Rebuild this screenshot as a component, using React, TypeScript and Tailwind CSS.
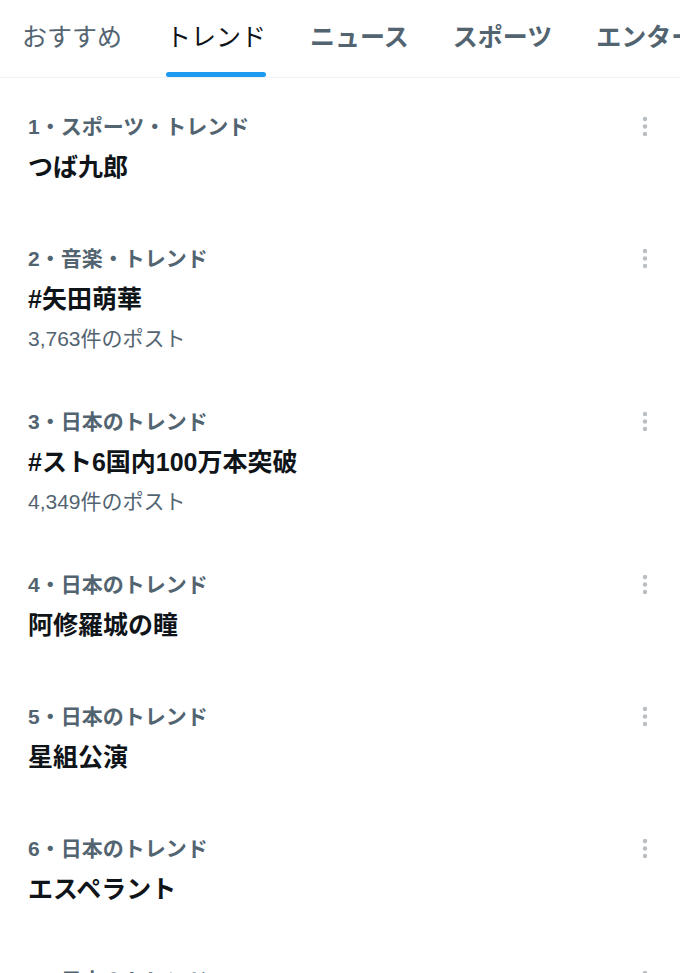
const tabs = [
  { label: 'おすすめ', state: 'plain' },
  { label: 'トレンド', state: 'active' },
  { label: 'ニュース', state: 'bold' },
  { label: 'スポーツ', state: 'bold' },
  { label: 'エンターテイメント', state: 'bold' },
]

const trends = [
  { meta: '1・スポーツ・トレンド', title: 'つば九郎' },
  { meta: '2・音楽・トレンド', title: '#矢田萌華', count: '3,763件のポスト' },
  { meta: '3・日本のトレンド', title: '#スト6国内100万本突破', count: '4,349件のポスト' },
  { meta: '4・日本のトレンド', title: '阿修羅城の瞳' },
  { meta: '5・日本のトレンド', title: '星組公演' },
  { meta: '6・日本のトレンド', title: 'エスペラント' },
  { meta: '7・日本のトレンド', title: '' },
]

function MoreIcon() {
  return (
    <svg width="8" height="24" viewBox="0 0 8 24" className="text-[#b9bec3]">
      <circle cx="4" cy="4" r="2.2" fill="currentColor" />
      <circle cx="4" cy="11.5" r="2.2" fill="currentColor" />
      <circle cx="4" cy="19" r="2.2" fill="currentColor" />
    </svg>
  )
}

function App() {
  return (
    <div
      className="w-[680px] h-[973px] overflow-hidden bg-white"
      style={{ fontFamily: '"Liberation Sans", "Noto Sans CJK JP", sans-serif' }}
    >
      {/* tab bar */}
      <div className="flex h-[78px] gap-[44px] overflow-hidden whitespace-nowrap border-b border-[#eff3f4] pl-[22px]">
        {tabs.map((t) => (
          <div key={t.label} className="relative flex shrink-0 items-center pb-[2px]">
            <span
              className={
                t.state === 'active'
                  ? 'text-[25px] leading-none text-[#0f1419]'
                  : t.state === 'bold'
                    ? 'text-[25px] leading-none font-bold text-[#536471]'
                    : 'text-[25px] leading-none text-[#536471]'
              }
            >
              {t.label}
            </span>
            {t.state === 'active' && (
              <div className="absolute bottom-0 left-0 right-0 h-[5px] rounded-full bg-[#1d9bf0]" />
            )}
          </div>
        ))}
      </div>

      {/* trend list */}
      <div className="flex flex-col">
        {trends.map((t) => (
          <div
            key={t.meta}
            className={
              t.count
                ? 'flex pl-[28px] pr-[31px] pt-[34px] pb-[19px]'
                : 'flex pl-[28px] pr-[31px] pt-[34px] pb-[27px]'
            }
          >
            <div className="flex flex-1 flex-col">
              <div className="text-[21px] leading-[30px] font-bold text-[#536471]">{t.meta}</div>
              <div className="mt-[9px] text-[25px] leading-[32px] font-bold text-[#0f1419]">{t.title}</div>
              {t.count && (
                <div className="mt-[9px] text-[21px] leading-[30px] text-[#536471]">{t.count}</div>
              )}
            </div>
            <div className="flex h-[30px] items-center">
              <MoreIcon />
            </div>
          </div>
        ))}
      </div>
    </div>
  )
}

export default App
